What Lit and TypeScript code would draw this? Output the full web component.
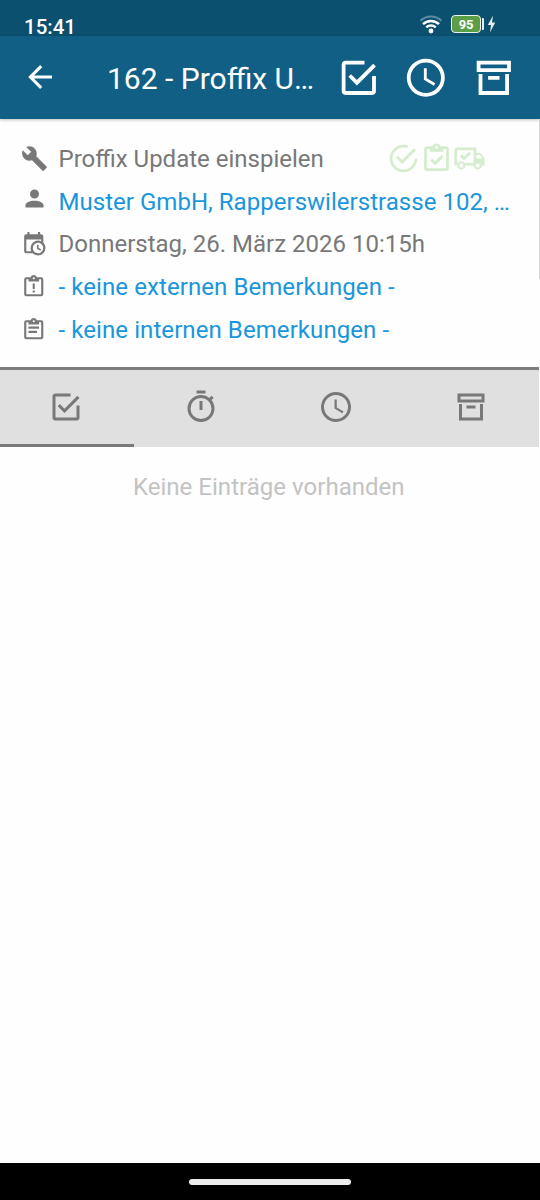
import { LitElement, html, css, svg } from "lit";
import { customElement, property } from "lit/decorators.js";

const CLIP =
  "M19,3H14.82C14.4,1.84 13.3,1 12,1C10.7,1 9.6,1.84 9.18,3H5A2,2 0 0,0 3,5V19A2,2 0 0,0 5,21H19A2,2 0 0,0 21,19V5A2,2 0 0,0 19,3M12,3A1,1 0 0,1 13,4A1,1 0 0,1 12,5A1,1 0 0,1 11,4A1,1 0 0,1 12,3M7,7H17V5H19V19H5V5H7V7";

const ICONS: Record<string, string> = {
  back: "M20,11V13H8L13.5,18.5L12.08,19.92L4.16,12L12.08,4.08L13.5,5.5L8,11H20Z",
  checkbox:
    "M19,19H5V5H15V3H5C3.89,3 3,3.89 3,5V19A2,2 0 0,0 5,21H19A2,2 0 0,0 21,19V11H19M7.91,10.08L6.5,11.5L11,16L21,6L19.59,4.58L11,13.17L7.91,10.08Z",
  clock:
    "M12,20A8,8 0 0,0 20,12A8,8 0 0,0 12,4A8,8 0 0,0 4,12A8,8 0 0,0 12,20M12,2A10,10 0 0,1 22,12A10,10 0 0,1 12,22C6.47,22 2,17.5 2,12A10,10 0 0,1 12,2M12.5,7V12.25L17,14.92L16.25,16.15L11,13V7H12.5Z",
  archive:
    "M20,21H4V10H6V19H18V10H20V21M3,3H21V9H3V3M5,5V7H19V5M9,11V13H15V11H9Z",
  timer:
    "M12,20A7,7 0 0,1 5,13A7,7 0 0,1 12,6A7,7 0 0,1 19,13A7,7 0 0,1 12,20M19.03,7.39L20.45,5.97C20,5.46 19.55,5 19.04,4.56L17.62,6C16.07,4.74 14.12,4 12,4A9,9 0 0,0 3,13A9,9 0 0,0 12,22C17,22 21,17.97 21,13C21,10.88 20.26,8.93 19.03,7.39M11,14H13V8H11M15,1H9V3H15V1Z",
  wrench:
    "M22.7,19L13.6,9.9C14.5,7.6 14,4.9 12.1,3C10.1,1 7.1,0.6 4.7,1.7L9,6L6,9L1.6,4.7C0.4,7.1 0.9,10.1 2.9,12.1C4.8,14 7.5,14.5 9.8,13.6L18.9,22.7C19.3,23.1 19.9,23.1 20.3,22.7L22.6,20.4C23.1,20 23.1,19.3 22.7,19Z",
  account:
    "M12,4A4,4 0 0,1 16,8A4,4 0 0,1 12,12A4,4 0 0,1 8,8A4,4 0 0,1 12,4M12,14C16.42,14 20,15.79 20,18V20H4V18C4,15.79 7.58,14 12,14Z",
  calendar:
    "M15,13H16.5V15.82L18.94,17.23L18.19,18.53L15,16.69V13M19,8H5V19H9.67C9.24,18.09 9,17.07 9,16A7,7 0 0,1 16,9C17.07,9 18.09,9.24 19,9.67V8M5,21C3.89,21 3,20.1 3,19V5C3,3.89 3.89,3 5,3H6V1H8V3H16V1H18V3H19A2,2 0 0,1 21,5V11.1C22.24,12.36 23,14.09 23,16A7,7 0 0,1 16,23C14.09,23 12.36,22.24 11.1,21H5M16,11.15A4.85,4.85 0 0,0 11.15,16C11.15,18.68 13.32,20.85 16,20.85A4.85,4.85 0 0,0 20.85,16C20.85,13.32 18.68,11.15 16,11.15Z",
  noteAlert: CLIP + "M11,9H13V14H11V9M11,15.5H13V17.5H11V15.5Z",
  noteText: CLIP + "M17,11H7V9H17V11M15,15H7V13H15V15Z",
  noteCheck: CLIP + "M7.5,13.5L9,12L11,14L15.5,9.5L17,11L11,17L7.5,13.5Z",
  checkCircle:
    "M20,12A8,8 0 0,1 12,20A8,8 0 0,1 4,12A8,8 0 0,1 12,4C12.76,4 13.5,4.11 14.2,4.31L15.77,2.74C14.61,2.26 13.34,2 12,2A10,10 0 0,0 2,12A10,10 0 0,0 12,22A10,10 0 0,0 22,12M7.91,10.08L6.5,11.5L11,16L21,6L19.59,4.58L11,13.17L7.91,10.08Z",
  truck:
    "M18,18.5A1.5,1.5 0 0,0 19.5,17A1.5,1.5 0 0,0 18,15.5A1.5,1.5 0 0,0 16.5,17A1.5,1.5 0 0,0 18,18.5M19.5,9.5H17V12H21.46L19.5,9.5M6,18.5A1.5,1.5 0 0,0 7.5,17A1.5,1.5 0 0,0 6,15.5A1.5,1.5 0 0,0 4.5,17A1.5,1.5 0 0,0 6,18.5M20,8L23,12V17H21A3,3 0 0,1 18,20A3,3 0 0,1 15,17H9A3,3 0 0,1 6,20A3,3 0 0,1 3,17H1V6C1,4.89 1.89,4 3,4H17V8H20M3,6V15H3.76C4.31,14.39 5.11,14 6,14C6.89,14 7.69,14.39 8.24,15H15V6H3M5,10.5L6.5,9L8,10.5L11.5,7L13,8.5L8,13.5L5,10.5Z",
};

@customElement("mdi-icon")
class MdiIcon extends LitElement {
  @property() name = "";
  static styles = css`
    :host { display: block; flex: none; }
    .glyph { display: block; width: 100%; height: 100%; fill: currentColor; }
  `;
  render() {
    return html`<svg class="glyph" viewBox="0 0 24 24">${svg`<path fill-rule="evenodd" d=${ICONS[this.name]}></path>`}</svg>`;
  }
}

@customElement("app-root")
class AppRoot extends LitElement {
  static styles = css`
    * { box-sizing: border-box; }
    :host {
      display: flex; flex-direction: column; position: relative;
      width: 540px; height: 1200px; overflow: hidden;
      background: #fefefe; font-family: Roboto, sans-serif; color: #787878;
    }
    .status {
      flex: none; height: 36px; background: #0b506f; color: #fff;
      display: flex; align-items: flex-start; padding: 0 43px 0 24px;
    }
    .time { flex: 1; font-size: 20.5px; line-height: 24px; font-weight: 500; padding-top: 15px; height: 36px; white-space: nowrap; }
    .wifi { width: 24px; height: 20px; margin: 14px 8px 0 0; }
    .battery {
      width: 30px; height: 18px; margin-top: 15px; border: 1.5px solid #e9f2ee; border-radius: 4px;
      background: #5a9f45; font-size: 13px; line-height: 18px; font-weight: 700; text-align: center; letter-spacing: -0.2px;
    }
    .cap { width: 2.5px; height: 12px; margin: 18px 3px 0 0.5px; background: #e4edf1; border-radius: 0 1px 1px 0; }
    .bolt { width: 9px; height: 18px; margin: 15px 1px 0 0; }
    .bar {
      flex: none; height: 83px; background: #125f85; color: #fff; display: flex; align-items: center;
      padding: 0 23.9px 0 22px; position: relative; box-shadow: 0 1px 3px rgba(0, 0, 0, 0.25);
    }
    .back { width: 36px; height: 36px; margin-top: -2px; }
    .title { flex: 1; padding-left: 49px; font-size: 30px; line-height: 40px; white-space: nowrap; padding-top: 2px; }
    .actions { display: flex; gap: 21.9px; }
    .action { width: 45.6px; height: 45.6px; }
    .details { flex: none; height: 248px; padding-top: 18.5px; position: relative; }
    .row { display: flex; align-items: center; height: 42.75px; padding-left: 20px; }
    .slot { width: 28px; display: flex; justify-content: center; }
    .slot.low { padding: 0 1px 0 0; }
    .slot.high { padding-bottom: 6px; }
    .slot.left { padding: 0 1px 1px 0; }
    .small { width: 25.5px; height: 25.5px; }
    .large { width: 27px; height: 27px; }
    .text { padding-left: 10.5px; font-size: 24px; line-height: 32px; white-space: nowrap; }
    .text.note { letter-spacing: 0.08px; }
    .text.address { letter-spacing: 0.03px; }
    .first { flex: 1; }
    .link { color: #1996dc; }
    .marks { display: flex; color: #d5ecce; margin-right: 54px; }
    .mark { width: 33px; height: 33px; }
    .scroll { position: absolute; right: 0; top: 0; width: 1.5px; height: 160px; background: #dadada; }
    .tabs {
      flex: none; width: 538.5px; height: 79.5px; border-top: 3px solid #7d7d7d; background: #e0e0e0;
      display: flex;
    }
    .tab { flex: 0 0 135px; display: flex; justify-content: center; padding-top: 19px; border-bottom: 3px solid transparent; }
    .tab.active { flex-basis: 133.5px; padding-right: 1.5px; border-bottom-color: #7a7a7a; }
    .tabicon { width: 36px; height: 36px; }
    .empty { flex: 1; padding-top: 24px; text-align: center; font-size: 24px; line-height: 32px; color: #c3c3c3; padding-right: 2.5px; letter-spacing: 0.03px; }
    .nav { flex: none; height: 37px; background: #000; display: flex; justify-content: center; padding-top: 16px; }
    .pill { width: 162px; height: 6px; border-radius: 3px; background: #ececec; }
  `;

  render() {
    return html`
      <div class="status">
        <div class="time">15:41</div>
        <svg class="wifi" viewBox="0 0 24 20" fill="none" stroke="#fff" stroke-width="2.2">
          <path d="M1.5 6.8A15 15 0 0 1 22.5 6.8" stroke="#5d8ba1"></path>
          <path d="M4 10.2A11.5 11.5 0 0 1 20 10.2" stroke-width="2.5"></path>
          <path d="M7.3 13.4A7 7 0 0 1 16.7 13.4" stroke-width="2.5"></path>
          <circle cx="12" cy="17" r="2.4" fill="#fff" stroke="none"></circle>
        </svg>
        <div class="battery">95</div>
        <div class="cap"></div>
        <svg class="bolt" viewBox="0 0 9 18"><path d="M6 0.5L0.8 10H4L3 17.5L8.2 7.5H5Z" fill="#e4edf1"></path></svg>
      </div>
      <div class="bar">
        <mdi-icon class="back" name="back"></mdi-icon>
        <div class="title">162 - Proffix U…</div>
        <div class="actions">
          ${["checkbox", "clock", "archive"].map((n) => html`<mdi-icon class="action" name=${n}></mdi-icon>`)}
        </div>
      </div>
      <div class="details">
        <div class="row">
          <div class="slot"><mdi-icon class="large" name="wrench"></mdi-icon></div>
          <div class="text first">Proffix Update einspielen</div>
          <div class="marks">
            ${["checkCircle", "noteCheck", "truck"].map((n) => html`<mdi-icon class="mark" name=${n}></mdi-icon>`)}
          </div>
        </div>
        <div class="row">
          <div class="slot high"><mdi-icon class="large" name="account"></mdi-icon></div>
          <div class="text address link">Muster GmbH, Rapperswilerstrasse 102, …</div>
        </div>
        <div class="row">
          <div class="slot left"><mdi-icon class="small" name="calendar"></mdi-icon></div>
          <div class="text">Donnerstag, 26. März 2026 10:15h</div>
        </div>
        <div class="row">
          <div class="slot low"><mdi-icon class="small" name="noteAlert"></mdi-icon></div>
          <div class="text note link">- keine externen Bemerkungen -</div>
        </div>
        <div class="row">
          <div class="slot low"><mdi-icon class="small" name="noteText"></mdi-icon></div>
          <div class="text note link">- keine internen Bemerkungen -</div>
        </div>
        <div class="scroll"></div>
      </div>
      <div class="tabs">
        ${["checkbox", "timer", "clock", "archive"].map(
          (n, i) => html`<div class="tab ${i === 0 ? "active" : ""}"><mdi-icon class="tabicon" name=${n}></mdi-icon></div>`
        )}
      </div>
      <div class="empty">Keine Einträge vorhanden</div>
      <div class="nav"><div class="pill"></div></div>
    `;
  }
}
